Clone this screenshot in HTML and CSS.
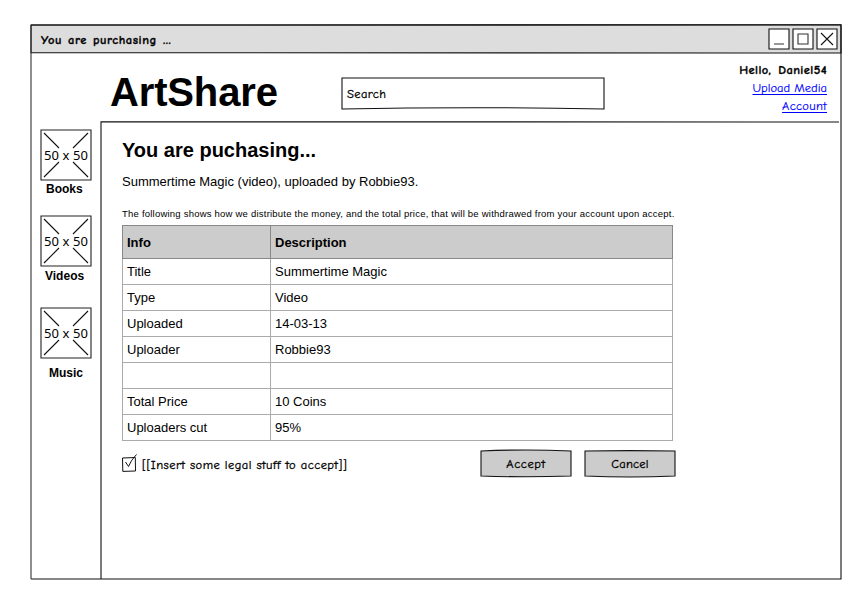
FILE: index.html
```html
<!DOCTYPE html>
<html lang="en">
<head>
<meta charset="utf-8">
<title>You are purchasing ...</title>
<link rel="stylesheet" href="styles.css">
</head>
<body>
<div class="window">
  <svg class="frame" viewBox="0 0 812 556" aria-hidden="true">
    <path class="bar" d="M1 1 Q400 .2 811 .8 L811 29 Q500 28.2 1 28.6Z"/>
    <path d="M1 1 Q400 .2 811 1 Q811.8 250 811 555 Q400 555.8 1 555"/>
    <path class="soft" d="M1 1V555"/>
    <path d="M809 98 Q400 97.2 71 97.8 Q70.2 300 71 555"/>
  </svg>
  <header class="titlebar">
    <span class="title">You are purchasing ...</span>
    <svg class="controls" viewBox="0 0 70 22" aria-hidden="true">
      <path class="key" d="M1 1h20v20H1zM25 1h20v20H25zM49 1h20v20H49z"/>
      <path class="soft" d="M6 16h10M30 6h10v10H30z"/>
      <path class="cross" d="M53 5l12 12M65 5L53 17"/>
    </svg>
  </header>
  <div class="masthead">
    <div class="logo">ArtShare</div>
    <div class="search">
      <svg class="sketch" viewBox="0 0 264 33" aria-hidden="true"><path d="M1 1H263V32Q132 29.4 1 32Z"/></svg>
      <span class="search-text">Search</span>
    </div>
    <nav class="account">
      <b class="hello">Hello, Daniel54</b>
      <a class="upload" href="#">Upload Media</a>
      <a class="acct" href="#">Account</a>
    </nav>
  </div>
  <div class="content">
    <nav class="sidebar">
      <div class="category books">
        <svg class="thumb" viewBox="0 0 52 52"><path class="edge" d="M1 1H51V51H1Z"/><path d="M4 4L19 19M48 4L33 19M4 48L19 33M48 48L33 33"/><text x="4" y="31" textLength="44">50 x 50</text></svg>
        <b>Books</b>
      </div>
      <div class="category videos">
        <svg class="thumb" viewBox="0 0 52 52"><path class="edge" d="M1 1H51V51H1Z"/><path d="M4 4L19 19M48 4L33 19M4 48L19 33M48 48L33 33"/><text x="4" y="31" textLength="44">50 x 50</text></svg>
        <b>Videos</b>
      </div>
      <div class="category music">
        <svg class="thumb" viewBox="0 0 52 52"><path class="edge" d="M1 1H51V51H1Z"/><path d="M4 4L19 19M48 4L33 19M4 48L19 33M48 48L33 33"/><text x="4" y="31" textLength="44">50 x 50</text></svg>
        <b>Music</b>
      </div>
    </nav>
    <main class="main">
      <h1>You are puchasing...</h1>
      <p class="item">Summertime Magic (video), uploaded by Robbie93.</p>
      <p class="note">The following shows how we distribute the money, and the total price, that will be withdrawed from your account upon accept.</p>
      <table>
        <thead><tr><th>Info</th><th>Description</th></tr></thead>
        <tbody>
          <tr><td>Title</td><td>Summertime Magic</td></tr>
          <tr><td>Type</td><td>Video</td></tr>
          <tr><td>Uploaded</td><td>14-03-13</td></tr>
          <tr><td>Uploader</td><td>Robbie93</td></tr>
          <tr><td></td><td></td></tr>
          <tr><td>Total Price</td><td>10 Coins</td></tr>
          <tr><td>Uploaders cut</td><td>95%</td></tr>
        </tbody>
      </table>
      <div class="actions">
        <svg class="check" viewBox="0 0 17 20" aria-hidden="true"><path d="M1.5 5L14.3 4.5L14.5 18L1.8 18.4Z"/><path d="M4.5 9L7.5 13.5Q10 7 15.5 1.5"/></svg>
        <span class="legal">[[Insert some legal stuff to accept]]</span>
        <div class="button">
          <svg class="sketch" viewBox="0 0 92 29" aria-hidden="true"><path d="M1 2Q46 0 91 2V27Q46 28.6 1 27Z"/></svg>
          <span class="accept">Accept</span>
        </div>
        <div class="button">
          <svg class="sketch" viewBox="0 0 92 29" aria-hidden="true"><path d="M1 2Q46 1.2 91 2V27Q46 29 1 27Z"/></svg>
          <span class="cancel">Cancel</span>
        </div>
      </div>
    </main>
  </div>
</div>
</body>
</html>
```
FILE: styles.css
```css
* { box-sizing: border-box; }
body { margin: 0; background: #fff; color: #000; font: 13px/16px "Liberation Sans", Arial, sans-serif; }
svg { fill: none; stroke: #111; stroke-width: 1.1; display: block; }
.window { position: relative; isolation: isolate; width: 812px; height: 556px; margin: 24px 0 0 30px; }
.frame { position: absolute; inset: 0; z-index: -1; width: 812px; height: 556px; }
.bar { fill: #ddd; }
.titlebar, .search, .account, .legal, .button { font-family: "Comic Sans MS", "Comic Neue", Lato, sans-serif; font-size: 12.5px; white-space: nowrap; -webkit-text-stroke: .3px currentColor; }
.titlebar { display: flex; justify-content: space-between; align-items: center; height: 30px; padding: 0 4px 0 11px; }
.title { font-weight: bold; padding-top: 2px; letter-spacing: .55px; word-spacing: 1px; }
.controls { width: 70px; height: 22px; }
.key { fill: #fff; }
.soft { stroke: #333; }
.masthead { display: flex; height: 68px; padding-left: 80px; }
.logo { width: 231px; padding-top: 15px; font-size: 40px; font-weight: bold; line-height: 46px; letter-spacing: -.15px; }
.search { position: relative; width: 264px; height: 33px; margin-top: 23px; padding: 9px 6px; letter-spacing: .4px; }
.sketch { position: absolute; inset: 0; width: 100%; height: 100%; z-index: -1; }
.account { display: flex; flex-direction: column; align-items: flex-end; margin-left: auto; padding: 7px 15px 0 0; line-height: 18px; }
.hello { letter-spacing: .4px; word-spacing: 2px; }
.account a { color: #00f; text-underline-offset: 2px; -webkit-text-stroke-width: .15px; }
.acct { letter-spacing: .3px; }
.content { display: flex; }
.sidebar { display: flex; flex-direction: column; width: 71px; padding: 7px 0 0 10px; }
.category { display: flex; flex-direction: column; width: 52px; }
.category b { font-size: 12px; }
.thumb { width: 52px; height: 52px; }
.thumb text { font: 13px "Noto Sans", sans-serif; fill: #000; stroke: none; }
.edge { stroke: #222; }
.books { height: 86px; }
.books b { margin-left: 6px; }
.videos { height: 92px; }
.videos b { margin: 1px 0 0 5px; }
.music b { margin: 6px 0 0 9px; }
.main { width: 576px; padding: 16px 0 0 21px; }
h1 { margin: 0; font-size: 20px; line-height: 24px; }
p { margin: 0; white-space: nowrap; }
.item { margin-top: 12px; }
.note { margin-top: 18px; font-size: 9.5px; line-height: 12px; letter-spacing: .22px; }
table { width: 551px; margin-top: 5px; border-collapse: collapse; table-layout: fixed; }
th, td { height: 26px; padding: 0 4px; border: 1px solid #aaa; text-align: left; }
th { height: 33px; padding-top: 1px; background: #ccc; border-color: #888; }
th:first-child { width: 148px; }
.actions { display: flex; height: 29px; margin-top: 8px; width: 555px; }
.check { flex: none; width: 17px; height: 20px; margin-top: 4px; margin-left: -1px; stroke-width: 1; }
.legal { flex: none; padding-top: 8px; margin-left: 4px; width: 338px; letter-spacing: .45px; }
.button { position: relative; width: 92px; height: 29px; flex: none; margin-right: 12px; text-align: center; line-height: 31px; letter-spacing: .6px; }
.cancel { letter-spacing: .2px; }
.button .sketch { fill: #ccc; }
```
